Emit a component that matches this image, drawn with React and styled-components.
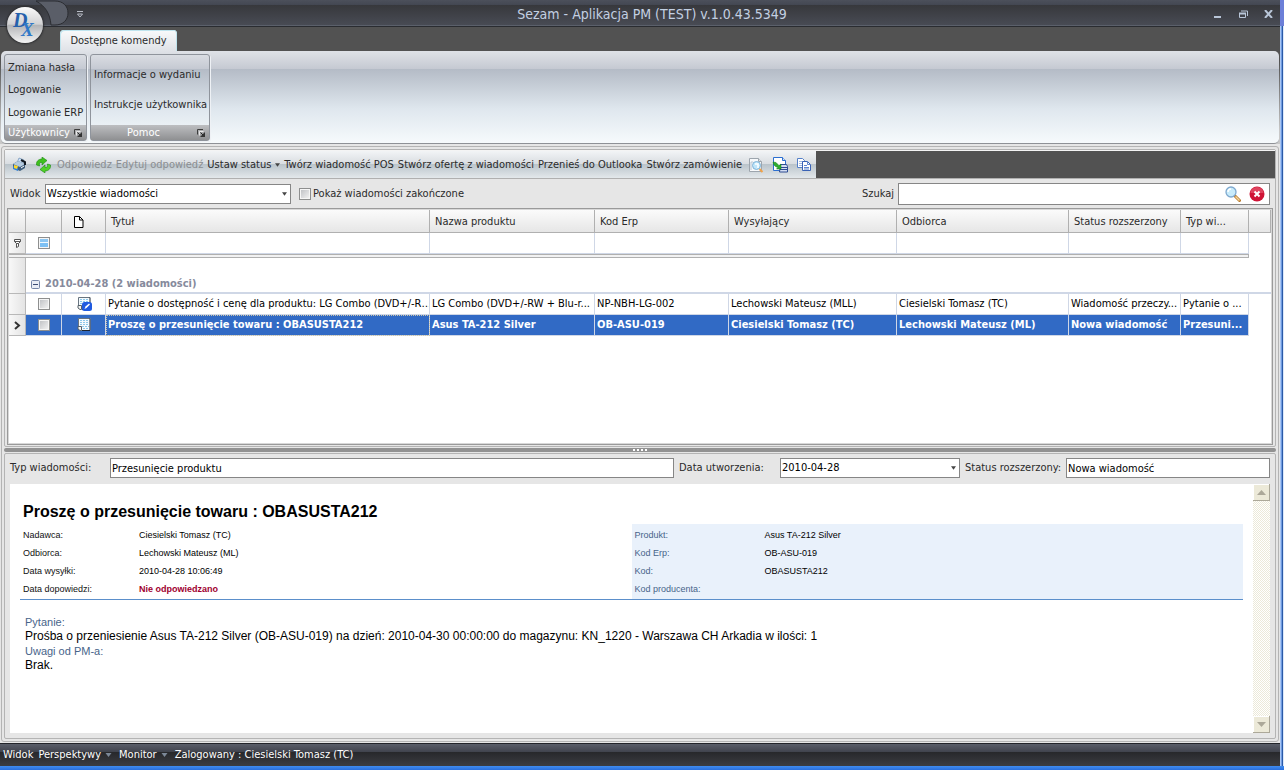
import React, { useState } from 'react';
import styled, { createGlobalStyle, css } from 'styled-components';

const GlobalStyle = createGlobalStyle`
  * {
    box-sizing: border-box;
  }

  body {
    margin: 0;
    background: #e6e6e6;
    color: #2a2a2a;
    font-family: 'DejaVu Sans Condensed', 'Noto Sans', sans-serif;
    font-size: 11px;
    line-height: 14px;
  }

  button, input, select {
    font: inherit;
    color: inherit;
    margin: 0;
    padding: 0;
    border: 0;
    background: none;
  }
`;

const Desktop = styled.div`
  display: grid;
  grid-template-columns: 1fr 4px;
  grid-template-rows: 1fr 4px;
  min-height: 100vh;
`;

const DesktopEdge = styled.div`
  background: linear-gradient(90deg, #a9c6f4 0 1px, #6f9be0 1px 2px, #2b5aa8 2px 3px, #dbe8fb 3px);
  border-top: 26px solid #6c7fd8;
`;

const DesktopBottom = styled.div`
  grid-column: 1 / 3;
  background: linear-gradient(#3f8cf0, #2a6fdc);
`;

const AppWindow = styled.div`
  position: relative;
  display: flex;
  flex-direction: column;
  min-width: 0;
`;

/* Title bar */

const TitleBar = styled.header`
  display: flex;
  align-items: center;
  height: 27px;
  padding: 0 4px 0 76px;
  background: linear-gradient(#4c505b 0, #434752 5px, #37383c 5px, #484b54 25px, #5b606b 25px, #5b606b 26px, #2a2c31 26px);
`;

const Title = styled.h1`
  flex: 1;
  margin: 0;
  padding-left: 10px;
  font-size: 14px;
  font-weight: normal;
  line-height: 16px;
  text-align: center;
  color: #c3d0e2;
`;

const WindowButtons = styled.div`
  display: flex;
  gap: 9px;
`;

const IconButton = styled.button`
  display: flex;
  align-items: center;
  justify-content: center;
  flex: none;
  width: ${(p) => p.$size || 16}px;
  height: ${(p) => p.$size || 16}px;
`;

const OrbHolder = styled.svg`
  position: absolute;
  left: 0;
  top: 0;
`;

const Orb = styled.button`
  position: absolute;
  left: 7px;
  top: 7px;
  width: 36px;
  height: 36px;
  border-radius: 50%;
  background: linear-gradient(#fafafa 0, #d2d2d4 48%, #b2b3b6 50%, #f4f4f4 100%);
  box-shadow: 0 0 2px 1px #2c2d30;
  color: #2560ac;
`;

/* Ribbon */

const TabStrip = styled.nav`
  display: flex;
  align-items: flex-end;
  height: 24px;
  padding-left: 60px;
  background: #525252;
`;

const Tab = styled.button`
  height: 21px;
  padding: 0 10px;
  min-width: 117px;
  border-radius: 4px 4px 0 0;
  background: linear-gradient(#f9fafb, #dfe2e7);
  box-shadow: inset 1px 1px 0 #bfe4ee, inset -1px 0 0 #bfe4ee;
`;

const RibbonBack = styled.div`
  padding: 0 1px;
  background: linear-gradient(#525252 10px, #c8c8c8 80px);
`;

const Ribbon = styled.div`
  display: flex;
  gap: 3px;
  height: 93px;
  padding: 3px 3px 2px;
  border-radius: 5px;
  border-bottom: 1px solid #8e9196;
  background: linear-gradient(#dfe2e7 0, #c5c9d2 18px, #b4bbc6 18px, #dfe7ee 58px, #f6fafc 92px);
`;

const RibbonGroup = styled.section`
  display: flex;
  flex-direction: column;
  width: ${(p) => p.$width}px;
  border: 1px solid #8f949c;
  border-radius: 3px;
  box-shadow: 1px 1px 0 #eef1f5;
`;

const RibbonItems = styled.div`
  display: flex;
  flex: 1;
  flex-direction: column;
  align-items: flex-start;
  justify-content: space-evenly;
  padding-left: 3px;
`;

const RibbonItem = styled.button`
  height: 20px;
  white-space: nowrap;
`;

const RibbonCaption = styled.div`
  display: flex;
  align-items: center;
  height: 15px;
  padding: 0 2px 0 1px;
  background: linear-gradient(#bdbec1, #8f9092);
  color: #fff;
`;

const CaptionText = styled.span`
  flex: 1;
  text-align: center;
`;

/* Work area */

const WorkArea = styled.main`
  display: flex;
  flex: 1;
  flex-direction: column;
  margin: 2px 1px 1px 1px;
  padding: 2px;
  border: 1px solid #b4b4b4;
  border-radius: 3px;
`;

const Panel = styled.section`
  display: flex;
  flex: ${(p) => (p.$grow ? 1 : 0)} 0 ${(p) => p.$basis}px;
  flex-direction: column;
  border: 1px solid #b4b4b4;
  border-radius: 2px;
`;

const ToolbarRow = styled.div`
  display: flex;
  height: 29px;
  padding-top: 1px;
  border-bottom: 1px solid #b0b0b0;
  background: #525252;
  box-shadow: inset 0 1px 0 #f4f4f4;
`;

const Toolbar = styled.div`
  display: flex;
  align-items: center;
  gap: 4px;
  width: 811px;
  padding: 0 2px 0 4px;
  background: linear-gradient(#f2f4f6 0, #d9dde1 13px, #b9c3ca 13px, #e3e8eb 100%);
`;

const ToolbarButton = styled.button`
  display: flex;
  align-items: center;
  flex: none;
  gap: 4px;
  height: 20px;
  white-space: nowrap;

  &:disabled {
    color: #8b8e91;
  }
`;

const FilterBar = styled.div`
  display: flex;
  align-items: center;
  height: 29px;
  padding: 0 5px;
`;

const Label = styled.label`
  flex: none;
  width: ${(p) => (p.$width ? `${p.$width}px` : 'auto')};
  padding-left: ${(p) => (p.$spaced ? 5 : 0)}px;
  white-space: nowrap;
`;

const Field = styled.div`
  display: flex;
  align-items: center;
  flex: ${(p) => (p.$width ? 'none' : 1)};
  width: ${(p) => (p.$width ? `${p.$width}px` : 'auto')};
  height: ${(p) => (p.$tall ? 22 : 20)}px;
  padding-right: ${(p) => (p.$tall ? 0 : 3)}px;
  border: 1px solid #868686;
  background: #fff;
  color: #000;
`;

const fill = css`
  flex: 1;
  min-width: 0;
  height: 100%;
  outline: none;
`;

const TextInput = styled.input`
  ${fill}
  padding-left: 1px;
`;

const Select = styled.select`
  ${fill}
  appearance: none;
  padding-left: 1px;
`;

const CheckBox = styled.input`
  appearance: none;
  display: block;
  flex: none;
  width: 12px;
  height: 12px;
  border: 1px solid #8e8f8f;
  background: linear-gradient(135deg, #bcbec2, #f6f6f6);
  box-shadow: inset 0 0 0 1px #f6f6f6;

  &:checked {
    background: linear-gradient(#8cc6f2 4px, #eef8ff 4px, #eef8ff 5px, #7cc0f4 5px);
  }
`;

const CheckLabel = styled.label`
  display: flex;
  flex: 1;
  gap: 2px;
  align-items: center;
  padding-left: 8px;
`;

/* Grid */

const GridBox = styled.div`
  flex: 1;
  margin: 0 2px 1px 2px;
  padding: 1px;
  border: 1px solid #9a9a9a;
  background: #fff;
  box-shadow: inset 0 0 0 1px #d8d8d8;
`;

const Table = styled.table`
  width: 100%;
  table-layout: fixed;
  border-spacing: 0;
  color: #000;
`;

const HeadCell = styled.th`
  height: 23px;
  padding: 2px 4px 0 ${(p) => (p.$icon ? 12 : 5)}px;
  border: solid #b0b0b0;
  border-width: 0 1px 1px 0;
  background: linear-gradient(#fbfbfb, #e6e6e6);
  color: #2a2a2a;
  font-weight: normal;
  text-align: left;
  white-space: nowrap;

  svg {
    display: block;
  }
`;

const Cell = styled.td`
  height: 21px;
  padding: 0 0 0 ${(p) => (p.$icon ? 0 : 2)}px;
  border: solid #cfd7e6;
  border-width: 0 1px 1px 0;
  white-space: nowrap;
  overflow: hidden;
  outline: ${(p) => (p.$focused ? '1px dotted #cec6a8' : 'none')};
  outline-offset: -1px;
`;

const Row = styled.tr`
  background: ${(p) => (p.$selected ? '#316ac5' : '#fff')};
  color: ${(p) => (p.$selected ? '#fff' : '#000')};
  font-weight: ${(p) => (p.$selected ? 'bold' : 'normal')};
`;

const IndicatorCell = styled.td`
  padding: 0;
  border: solid #b8b8b8;
  border-width: 0 1px 1px 0;
  background: linear-gradient(90deg, #f8f8f8, #e4e4e4);
`;

const SplitCell = styled.td`
  height: 4px;
  padding: 0;
  border: solid #b0b0b0;
  border-width: 1px 1px 1px 0;
  background: #f2f2f2;
`;

const GroupCell = styled.td`
  height: 36px;
  padding: 0 0 1px 5px;
  border-bottom: 2px solid #cfd7e6;
  color: #868a9c;
  font-weight: bold;
  vertical-align: bottom;
`;

const GroupToggle = styled.button`
  display: flex;
  align-items: center;
  gap: 5px;
`;

const Centered = styled.div`
  display: flex;
  align-items: center;
  justify-content: center;
`;

const FilterInput = styled.input`
  display: block;
  width: 100%;
`;

const Splitter = styled.div`
  display: flex;
  align-items: center;
  justify-content: center;
  gap: 2px;
  height: 4px;
  margin: 1px 0;
  border-radius: 2px;
  background: #929292;
`;

const Grip = styled.span`
  width: 2px;
  height: 2px;
  background: #fff;
`;

/* Message details */

const DetailFields = styled.div`
  display: flex;
  align-items: center;
  height: 30px;
  padding: 0 5px 2px 5px;
`;

const Viewer = styled.div`
  display: flex;
  flex: 1;
  margin: 0 5px 5px 5px;
  background: #fff;
`;

const Report = styled.article`
  flex: 1;
  padding: 18px 10px 0 10px;
  font-family: 'Liberation Sans', Arial, sans-serif;
  color: #000;
`;

const ReportTitle = styled.h2`
  margin: 0 0 2px 3px;
  font-size: 16px;
  line-height: 20px;
`;

const ReportHead = styled.div`
  display: grid;
  grid-template-columns: 1fr 1fr;
  border-bottom: 1px solid #5b8fcb;
  font-size: 9px;
`;

const Facts = styled.dl`
  display: grid;
  grid-template-columns: ${(p) => p.$columns};
  grid-auto-rows: 18px;
  align-items: center;
  margin: 0;
  padding: 2px 3px 1px;
  background: ${(p) => (p.$shaded ? '#e9f1fb' : 'none')};

  dt {
    color: ${(p) => (p.$shaded ? '#47648a' : '#111')};
  }

  dd {
    margin: 0;
  }
`;

const Unanswered = styled.strong`
  color: #a00030;
`;

const Body = styled.div`
  padding: 15px 5px;
`;

const BodyLabel = styled.h3`
  margin: 0;
  font-size: 11px;
  font-weight: normal;
  line-height: 14px;
  color: #47648a;
`;

const BodyText = styled.p`
  margin: 0;
  font-size: 12px;
  line-height: 15px;
`;

const ScrollBar = styled.div`
  display: flex;
  flex-direction: column;
  justify-content: space-between;
  width: 17px;
  background: repeating-conic-gradient(#ece9d8 0 25%, #fff 0 50%) 0 0 / 2px 2px;
`;

const ScrollButton = styled.button`
  display: flex;
  align-items: center;
  justify-content: center;
  height: 17px;
  border: solid #aca899;
  border-width: 0 1px 1px 0;
  background: #ece9d8;
  box-shadow: inset 1px 1px 0 #fff;
`;

const StatusBar = styled.footer`
  display: flex;
  align-items: center;
  height: 23px;
  gap: 5px;
  padding: 0 3px;
  border-top: 1px solid #22242a;
  background: linear-gradient(#5a5e69 0, #40434d 8px, #27282b 8px, #3b3d42 100%);
  color: #fff;
`;

const StatusButton = styled.button`
  display: flex;
  align-items: center;
  gap: 4px;
  margin-right: ${(p) => (p.$menu ? 2 : 0)}px;
`;

const DownArrow = ({ color = '#444', size = 5 }) => (
  <svg width={size} height="4" viewBox="0 0 6 4" aria-hidden="true">
    <path d="M0 0h6L3 4z" fill={color} />
  </svg>
);

const LauncherIcon = () => (
  <svg width="8" height="8" viewBox="0 0 8 8" aria-hidden="true">
    <path d="M.5 5.500V.5H6" fill="none" stroke="#3c3c3c" />
    <path d="M2.500 6.500V2.500H6.500" fill="none" stroke="#e8e8e8" />
    <path d="M3.500 3.500l3 3" stroke="#222" />
    <path d="M8 3v5H3z" fill="#333" />
  </svg>
);

const PrintIcon = () => (
  <svg width="14" height="15" viewBox="0 0 14 15" aria-hidden="true">
    <path d="M7 1l5 2-2 5-5-2z" fill="#cfe5fa" stroke="#6c8db4" strokeWidth=".7" />
    <path d="M1 7l5-3 7 3v4l-5 3-7-3z" fill="#3d5d7c" />
    <path d="M1 7l5-3 7 3-5 3z" fill="#b4cbe0" />
    <path d="M9 3l4 2v3" fill="none" stroke="#101820" strokeWidth="2" />
    <path d="M1 9l5 2v3l-5-2z" fill="#2f7fd8" />
    <path d="M2 8l4 1-1 3-3-1z" fill="#ffd828" />
    <path d="M9 11l3-2" stroke="#fff" />
  </svg>
);

const RefreshIcon = () => (
  <svg width="15" height="16" viewBox="0 0 15 16" aria-hidden="true">
    <path d="M.5 8C0 4.500 2.500 2 6 2V0l5 3.500L6 8V5.500C4 5.200 3 6.200 3.500 9z" fill="#3fc01e" stroke="#198a10" strokeWidth=".6" />
    <path d="M14.500 8c.5 3.500-2 6-5.500 6v2l-5-3.500L9 8v2.500c2 .3 3-.7 2.500-3.500z" fill="#52d128" stroke="#198a10" strokeWidth=".6" />
  </svg>
);

const PreviewIcon = () => (
  <svg width="16" height="16" viewBox="0 0 16 16" aria-hidden="true">
    <path d="M1.500 1.500h9l3 3v10h-12z" fill="#f7f9fb" stroke="#9da5ad" />
    <path d="M10.500 1.500v3h3" fill="#dfe4e8" stroke="#9da5ad" />
    <path d="M3 5v8M3 5h2" stroke="#b8c4d0" />
    <circle cx="8.500" cy="8.500" r="4" fill="#bfe6fb" stroke="#7fb2d6" />
    <path d="M7 7h3v4" fill="none" stroke="#fff" strokeWidth="1.500" />
    <path d="M11.500 12l3 3" stroke="#f0a24a" strokeWidth="2" />
  </svg>
);

const ExportIcon = () => (
  <svg width="16" height="16" viewBox="0 0 16 16" aria-hidden="true">
    <path d="M1.500.5h9l3 3v10h-12z" fill="#fff" stroke="#2c6fd0" />
    <path d="M10.500.5v3h3" fill="#cfe2fa" stroke="#2c6fd0" />
    <path d="M8.500 7.500h6l1 2v5.500h-8z" fill="#d3ddf2" stroke="#2e4d92" />
    <path d="M8 10.500h7M8 12.500h7" stroke="#2e4d92" />
    <path d="M1 5l3 .500 3 3 2-1.500v5H4.500l1.500-1.500C3 10 1.500 8 1 5z" fill="#2fae2f" stroke="#137a1b" strokeWidth=".5" />
  </svg>
);

const CopyIcon = () => (
  <svg width="16" height="16" viewBox="0 0 16 16" aria-hidden="true">
    <path d="M1.500 1.500h5l2 2v7h-7z" fill="#fff" stroke="#5580c8" />
    <path d="M3 4.500h4M3 6.500h4M3 8.500h3" stroke="#9fb9e4" />
    <path d="M6.500 4.500h5l3 3v6h-8z" fill="#fff" stroke="#3a62b4" />
    <path d="M11.500 4.500v3h3M8 8.500h3M8 10.500h5M8 12h5" fill="none" stroke="#5f86cf" />
  </svg>
);

const SearchIcon = () => (
  <svg width="16" height="16" viewBox="0 0 16 16" aria-hidden="true">
    <path d="M10 10l4.500 4.500" stroke="#b97a2c" strokeWidth="3" strokeLinecap="round" />
    <path d="M10.500 10.500l4 4" stroke="#f6d79b" strokeWidth="1.500" />
    <circle cx="6" cy="6" r="5" fill="#c9ecfb" stroke="#7fa9cf" strokeWidth="1.300" />
    <path d="M3 6a3 3 0 013-3" fill="none" stroke="#fff" strokeWidth="1.500" />
  </svg>
);

const ClearIcon = () => (
  <svg width="16" height="16" viewBox="0 0 16 16" aria-hidden="true">
    <circle cx="8" cy="8" r="7.500" fill="#cf1436" />
    <path d="M1.500 7a6.500 6 0 0113 0z" fill="#e8637a" opacity=".6" />
    <path d="M5.500 5.500l5 5M10.500 5.500l-5 5" stroke="#fff" strokeWidth="2" />
  </svg>
);

const PageIcon = () => (
  <svg width="10" height="12" viewBox="0 0 10 12" aria-hidden="true">
    <path d="M.5.5h5l3.500 3.500v7.500H.5z" fill="#fff" stroke="#000" />
    <path d="M5.500.5V4H9" fill="none" stroke="#000" />
  </svg>
);

const FunnelIcon = () => (
  <svg width="7" height="9" viewBox="0 0 7 9" aria-hidden="true">
    <path d="M.5.5h6v2l-2 2v3l-2 1v-4l-2-2zM.5 2.500h6M2.500 4.500h2" fill="#fff" stroke="#555" />
  </svg>
);

const MessageIcon = ({ read }) => (
  <svg width="16" height="16" viewBox="0 0 16 16" aria-hidden="true">
    <path d="M2.500 1.500h12v12h-9l-3-3z" fill="#f4fafd" />
    <path d="M2.500 9V1.500h11.500" fill="none" stroke="#687480" />
    <path d="M14 1.500v12H6" fill="none" stroke="#1c2430" />
    <path d="M4 3.500h9M4 5.500h9M4 7.500h9M6 9.500h7M7 11.500h6" stroke="#8cc8ea" strokeDasharray="2 1" />
    <path d="M2 9.500h3.500v4H4l-2-1.500z" fill="#f4f4f0" stroke="#55606a" />
    {read && (
      <g>
        <rect x="6" y="6" width="10" height="9" rx="2.500" fill="#1f5ae0" />
        <path d="M8.500 13l1-2.500 3.500-3 1 1-3.500 3.500z" fill="#fff" />
      </g>
    )}
  </svg>
);

const commands = [
  { label: 'Odpowiedz', disabled: true },
  { label: 'Edytuj odpowiedź', disabled: true },
  { label: 'Ustaw status', menu: true },
  { label: 'Twórz wiadomość POS' },
  { label: 'Stwórz ofertę z wiadomości' },
  { label: 'Przenieś do Outlooka' },
  { label: 'Stwórz zamówienie' },
];

const columns = ['Tytuł', 'Nazwa produktu', 'Kod Erp', 'Wysyłający', 'Odbiorca', 'Status rozszerzony', 'Typ wi...'];
const columnWidths = [17, 36, 44, undefined, 165, 134, 168, 172, 112, 68, 22];

const messages = [
  {
    read: true,
    cells: [
      'Pytanie o dostępność i cenę dla produktu: LG Combo (DVD+/-R…',
      'LG Combo (DVD+/-RW  + Blu-r...',
      'NP-NBH-LG-002',
      'Lechowski Mateusz (MLL)',
      'Ciesielski Tomasz (TC)',
      'Wiadomość przeczy...',
      'Pytanie o ...',
    ],
  },
  {
    read: false,
    cells: [
      'Proszę o przesunięcie towaru : OBASUSTA212',
      'Asus TA-212 Silver',
      'OB-ASU-019',
      'Ciesielski Tomasz (TC)',
      'Lechowski Mateusz (ML)',
      'Nowa wiadomość',
      'Przesuni...',
    ],
  },
];

const MessageGrid = () => {
  const [selected, setSelected] = useState(1);

  return (
    <GridBox>
      <Table>
        <colgroup>
          {columnWidths.map((width, i) => (
            <col key={i} width={width} />
          ))}
        </colgroup>
        <thead>
          <tr>
            <HeadCell />
            <HeadCell />
            <HeadCell $icon>
              <PageIcon />
            </HeadCell>
            {columns.map((name) => (
              <HeadCell key={name}>{name}</HeadCell>
            ))}
            <HeadCell />
          </tr>
        </thead>
        <tbody>
          <tr>
            <IndicatorCell>
              <Centered>
                <FunnelIcon />
              </Centered>
            </IndicatorCell>
            <Cell $icon>
              <Centered>
                <CheckBox type="checkbox" defaultChecked aria-label="Filtr zaznaczenia" />
              </Centered>
            </Cell>
            <Cell />
            {columns.map((name) => (
              <Cell key={name}>
                <FilterInput aria-label={name} />
              </Cell>
            ))}
          </tr>
          <tr>
            <SplitCell colSpan={10} />
          </tr>
          <tr>
            <IndicatorCell />
            <GroupCell colSpan={10}>
              <GroupToggle>
                <svg width="9" height="9" viewBox="0 0 9 9" aria-hidden="true">
                  <rect x=".5" y=".5" width="8" height="8" rx="1" fill="#e9edf6" stroke="#7686a8" />
                  <path d="M2 4.500h5" stroke="#3c4c74" />
                </svg>
                2010-04-28 (2 wiadomości)
              </GroupToggle>
            </GroupCell>
          </tr>
          {messages.map((message, i) => (
            <Row key={message.cells[0]} $selected={selected === i} onClick={() => setSelected(i)}>
              <IndicatorCell>
                {selected === i && (
                  <Centered>
                    <svg width="7" height="9" viewBox="0 0 7 9" aria-hidden="true">
                      <path d="M1 1l4 3.500L1 8" fill="none" stroke="#333" strokeWidth="2" />
                    </svg>
                  </Centered>
                )}
              </IndicatorCell>
              <Cell $icon>
                <Centered>
                  <CheckBox type="checkbox" aria-label={message.cells[0]} />
                </Centered>
              </Cell>
              <Cell $icon>
                <Centered>
                  <MessageIcon read={message.read} />
                </Centered>
              </Cell>
              {message.cells.map((text, n) => (
                <Cell key={columns[n]} $focused={selected === i && n === 0}>
                  {text}
                </Cell>
              ))}
            </Row>
          ))}
        </tbody>
      </Table>
    </GridBox>
  );
};

const App = () => {
  const [search, setSearch] = useState('');

  return (
    <>
      <GlobalStyle />
      <Desktop>
        <AppWindow>
          <TitleBar>
            <IconButton $size={8} aria-label="Pasek szybkiego dostępu">
              <svg width="6" height="8" viewBox="0 0 6 8" aria-hidden="true">
                <path d="M0 1.500h6M.5 4h5L3 7z" fill="none" stroke="#b9bdc6" />
              </svg>
            </IconButton>
            <Title>Sezam - Aplikacja PM (TEST) v.1.0.43.5349</Title>
            <WindowButtons>
              <IconButton aria-label="Minimalizuj">
                <svg width="8" height="8" viewBox="0 0 8 8" aria-hidden="true">
                  <path d="M0 7h7" stroke="#b9c6d8" strokeWidth="2" />
                </svg>
              </IconButton>
              <IconButton aria-label="Przywróć">
                <svg width="9" height="8" viewBox="0 0 9 8" aria-hidden="true">
                  <path d="M2 1h6.500V6M.5 3v4.500h6V3.500" fill="none" stroke="#b9c6d8" />
                  <path d="M0 3.500h7" stroke="#b9c6d8" strokeWidth="2" />
                </svg>
              </IconButton>
              <IconButton aria-label="Zamknij">
                <svg width="9" height="8" viewBox="0 0 9 8" aria-hidden="true">
                  <path d="M1 0l7 8M8 0L1 8" stroke="#b9c6d8" strokeWidth="2" />
                </svg>
              </IconButton>
            </WindowButtons>
          </TitleBar>

          <TabStrip>
            <Tab>Dostępne komendy</Tab>
          </TabStrip>

          <OrbHolder width="70" height="28" viewBox="0 0 70 28" aria-hidden="true">
            <path d="M36 1h19c8 0 13 5 13 12s-5 12-13 12h-4C50 13 45 6 36 1z" fill="#5a5e68" stroke="#2b2d32" />
          </OrbHolder>
          <Orb aria-label="Menu aplikacji">
            <svg width="36" height="36" viewBox="0 0 36 36" fontFamily="Liberation Serif" fontStyle="italic" fontWeight="bold" fill="currentColor">
              <text x="6" y="20" fontSize="20">D</text>
              <text x="14" y="29" fontSize="19" fill="#2f78c8">X</text>
            </svg>
          </Orb>

          <RibbonBack>
            <Ribbon>
              <RibbonGroup $width={83}>
                <RibbonItems>
                  <RibbonItem>Zmiana hasła</RibbonItem>
                  <RibbonItem>Logowanie</RibbonItem>
                  <RibbonItem>Logowanie ERP</RibbonItem>
                </RibbonItems>
                <RibbonCaption>
                  <CaptionText>Użytkownicy</CaptionText>
                  <IconButton $size={12} aria-label="Użytkownicy – więcej">
                    <LauncherIcon />
                  </IconButton>
                </RibbonCaption>
              </RibbonGroup>
              <RibbonGroup $width={120}>
                <RibbonItems>
                  <RibbonItem>Informacje o wydaniu</RibbonItem>
                  <RibbonItem>Instrukcje użytkownika</RibbonItem>
                </RibbonItems>
                <RibbonCaption>
                  <CaptionText>Pomoc</CaptionText>
                  <IconButton $size={12} aria-label="Pomoc – więcej">
                    <LauncherIcon />
                  </IconButton>
                </RibbonCaption>
              </RibbonGroup>
            </Ribbon>
          </RibbonBack>

          <WorkArea>
            <Panel $basis={298}>
              <ToolbarRow>
                <Toolbar>
                  <IconButton $size={20} aria-label="Drukuj">
                    <PrintIcon />
                  </IconButton>
                  <IconButton $size={20} aria-label="Odśwież">
                    <RefreshIcon />
                  </IconButton>
                  {commands.map((command) => (
                    <ToolbarButton key={command.label} disabled={command.disabled}>
                      {command.label}
                      {command.menu && <DownArrow />}
                    </ToolbarButton>
                  ))}
                  <IconButton $size={20} aria-label="Podgląd">
                    <PreviewIcon />
                  </IconButton>
                  <IconButton $size={20} aria-label="Eksportuj">
                    <ExportIcon />
                  </IconButton>
                  <IconButton $size={20} aria-label="Kopiuj">
                    <CopyIcon />
                  </IconButton>
                </Toolbar>
              </ToolbarRow>
              <FilterBar>
                <Label htmlFor="view" $width={35}>Widok</Label>
                <Field $width={246}>
                  <Select id="view">
                    <option>Wszystkie wiadomości</option>
                  </Select>
                  <DownArrow />
                </Field>
                <CheckLabel>
                  <CheckBox type="checkbox" />
                  Pokaż wiadomości zakończone
                </CheckLabel>
                <Label htmlFor="search" $width={36}>Szukaj</Label>
                <Field $width={372} $tall>
                  <TextInput id="search" value={search} onChange={(e) => setSearch(e.target.value)} />
                  <IconButton $size={24} aria-label="Szukaj">
                    <SearchIcon />
                  </IconButton>
                  <IconButton $size={24} aria-label="Wyczyść" onClick={() => setSearch('')}>
                    <ClearIcon />
                  </IconButton>
                </Field>
              </FilterBar>
              <MessageGrid />
            </Panel>

            <Splitter>
              <Grip />
              <Grip />
              <Grip />
              <Grip />
            </Splitter>

            <Panel $basis={284} $grow>
              <DetailFields>
                <Label htmlFor="kind" $width={100}>Typ wiadomości:</Label>
                <Field>
                  <TextInput id="kind" defaultValue="Przesunięcie produktu" />
                </Field>
                <Label htmlFor="created" $width={106} $spaced>Data utworzenia:</Label>
                <Field $width={180}>
                  <Select id="created">
                    <option>2010-04-28</option>
                  </Select>
                  <DownArrow />
                </Field>
                <Label htmlFor="status" $width={106} $spaced>Status rozszerzony:</Label>
                <Field $width={204}>
                  <TextInput id="status" defaultValue="Nowa wiadomość" />
                </Field>
              </DetailFields>
              <Viewer>
                <Report>
                  <ReportTitle>Proszę o przesunięcie towaru : OBASUSTA212</ReportTitle>
                  <ReportHead>
                    <Facts $columns="116px 1fr">
                      <dt>Nadawca:</dt>
                      <dd>Ciesielski Tomasz (TC)</dd>
                      <dt>Odbiorca:</dt>
                      <dd>Lechowski Mateusz (ML)</dd>
                      <dt>Data wysyłki:</dt>
                      <dd>2010-04-28 10:06:49</dd>
                      <dt>Data dopowiedzi:</dt>
                      <dd>
                        <Unanswered>Nie odpowiedzano</Unanswered>
                      </dd>
                    </Facts>
                    <Facts $columns="130px 1fr" $shaded>
                      <dt>Produkt:</dt>
                      <dd>Asus TA-212 Silver</dd>
                      <dt>Kod Erp:</dt>
                      <dd>OB-ASU-019</dd>
                      <dt>Kod:</dt>
                      <dd>OBASUSTA212</dd>
                      <dt>Kod producenta:</dt>
                      <dd />
                    </Facts>
                  </ReportHead>
                  <Body>
                    <BodyLabel>Pytanie:</BodyLabel>
                    <BodyText>
                      Prośba o przeniesienie Asus TA-212 Silver (OB-ASU-019) na dzień: 2010-04-30 00:00:00 do magazynu: KN_1220 - Warszawa CH Arkadia w ilości: 1
                    </BodyText>
                    <BodyLabel>Uwagi od PM-a:</BodyLabel>
                    <BodyText>Brak.</BodyText>
                  </Body>
                </Report>
                <ScrollBar>
                  <ScrollButton aria-label="W górę">
                    <svg width="9" height="5" viewBox="0 0 9 5" aria-hidden="true">
                      <path d="M0 5l4.500-5L9 5z" fill="#aca899" />
                    </svg>
                  </ScrollButton>
                  <ScrollButton aria-label="W dół">
                    <svg width="9" height="5" viewBox="0 0 9 5" aria-hidden="true">
                      <path d="M0 0l4.500 5L9 0z" fill="#aca899" />
                    </svg>
                  </ScrollButton>
                </ScrollBar>
              </Viewer>
            </Panel>
          </WorkArea>

          <StatusBar>
            <StatusButton>Widok</StatusButton>
            <StatusButton $menu>
              Perspektywy
              <DownArrow color="#7c8898" size={7} />
            </StatusButton>
            <StatusButton $menu>
              Monitor
              <DownArrow color="#7c8898" size={7} />
            </StatusButton>
            <span>Zalogowany : Ciesielski Tomasz (TC)</span>
          </StatusBar>
        </AppWindow>
        <DesktopEdge />
        <DesktopBottom />
      </Desktop>
    </>
  );
};

export default App;
